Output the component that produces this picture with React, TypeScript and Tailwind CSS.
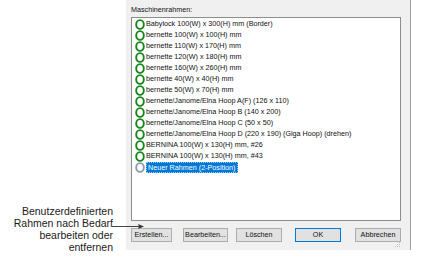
const hoops = [
    'Babylock 100(W) x 300(H) mm (Border)',
    'bernette 100(W) x 100(H) mm',
    'bernette 110(W) x 170(H) mm',
    'bernette 120(W) x 180(H) mm',
    'bernette 160(W) x 260(H) mm',
    'bernette 40(W) x 40(H) mm',
    'bernette 50(W) x 70(H) mm',
    'bernette/Janome/Elna Hoop A(F) (126 x 110)',
    'bernette/Janome/Elna Hoop B (140 x 200)',
    'bernette/Janome/Elna Hoop C (50 x 50)',
    'bernette/Janome/Elna Hoop D (220 x 190) (Giga Hoop) (drehen)',
    'BERNINA 100(W) x 130(H) mm, #26',
    'BERNINA 100(W) x 130(H) mm, #43',
];

function HoopIcon({ custom = false }: { custom?: boolean }) {
    return (
        <svg width="10" height="11" viewBox="0 0 10 11" className="shrink-0">
            <ellipse cx="5" cy="5.5" rx="3.8" ry="4.4" fill="none" stroke={custom ? '#8a9bb0' : '#17851b'} strokeWidth="1.9" />
        </svg>
    );
}

function Button({ label, width, primary = false }: { label: string; width: string; primary?: boolean }) {
    return (
        <div
            className={`flex h-[14px] items-center justify-center border bg-[#e1e1e1] text-[7.2px] text-[#111] ${width} ${
                primary ? 'border-[#0078d7]' : 'border-[#adadad]'
            }`}
        >
            {label}
        </div>
    );
}

export default function App() {
    return (
        <div className="relative flex h-[270px] w-[425px] bg-white font-['Liberation_Sans',Arial,sans-serif]">
            {/* annotation */}
            <div className="flex w-[126px] flex-col items-end pr-[13px] pt-[205px] text-right text-[10.5px] leading-[12px] text-[#1a1a1a]">
                <span>Benutzerdefinierten</span>
                <span>Rahmen nach Bedarf</span>
                <span>bearbeiten oder</span>
                <span>entfernen</span>
            </div>

            {/* dialog */}
            <div className="flex h-[250px] w-[285px] flex-col border-r border-[#a0a0a0] bg-[#f0f0f0] pl-[5px] pr-[9px]">
                <div className="pt-[6px] text-[7.2px] leading-[8px] text-[#111]">Maschinenrahmen:</div>
                <div className="mt-[3px] flex h-[205px] flex-col border border-[#8c8c8c] bg-white pl-[3px] pt-[1px]">
                    {hoops.map((h) => (
                        <div key={h} className="flex h-[11px] items-center gap-[1px] text-[7.2px] whitespace-nowrap text-[#111]">
                            <HoopIcon />
                            <span>{h}</span>
                        </div>
                    ))}
                    <div className="flex h-[11px] items-center gap-[1px] text-[7.2px] whitespace-nowrap">
                        <HoopIcon custom />
                        <span className="border border-dotted border-[#9cc7f0] bg-[#0078d7] px-[1px] leading-[9px] text-white">Neuer Rahmen (2-Position)</span>
                    </div>
                </div>
                <div className="mt-[7px] flex items-center">
                    <Button label="Erstellen..." width="w-[41px]" />
                    <div className="w-[11px]" />
                    <Button label="Bearbeiten..." width="w-[45px]" />
                    <div className="w-[8px]" />
                    <Button label="Löschen" width="w-[46px]" />
                    <div className="w-[13px]" />
                    <Button label="OK" width="w-[46px]" primary />
                    <div className="w-[14px]" />
                    <Button label="Abbrechen" width="w-[46px]" />
                </div>
                <div className="mt-auto mb-[2px] flex justify-end">
                    <svg width="6" height="6" viewBox="0 0 6 6">
                        <rect x="4" y="0" width="1" height="1" fill="#c0c0c0" />
                        <rect x="2" y="2" width="1" height="1" fill="#c0c0c0" />
                        <rect x="4" y="2" width="1" height="1" fill="#c0c0c0" />
                        <rect x="0" y="4" width="1" height="1" fill="#c0c0c0" />
                        <rect x="2" y="4" width="1" height="1" fill="#c0c0c0" />
                        <rect x="4" y="4" width="1" height="1" fill="#c0c0c0" />
                    </svg>
                </div>
            </div>

            {/* pointer arrow */}
            <svg className="absolute top-[222px] left-[112px]" width="34" height="8" viewBox="0 0 34 8">
                <line x1="0" y1="4.5" x2="28" y2="4.5" stroke="#444" strokeWidth="1" />
                <path d="M32 4.5 L26 2 L27 4.5 L26 7 Z" fill="#333" />
            </svg>
        </div>
    );
}
